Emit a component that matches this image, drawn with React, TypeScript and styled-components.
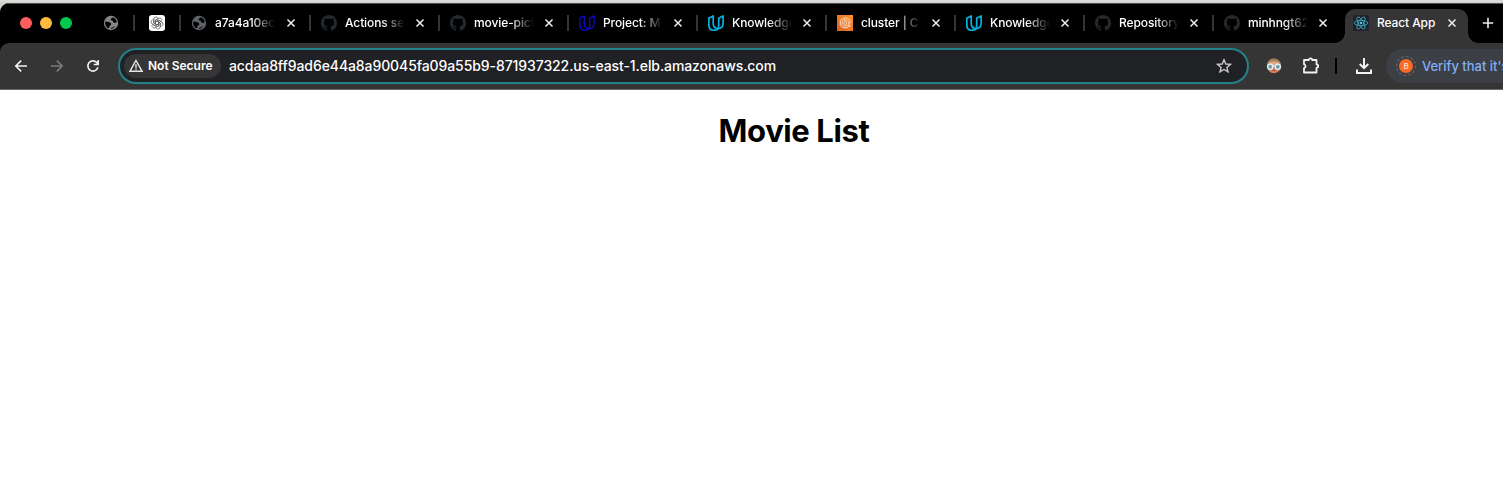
import React from 'react';
import styled, { createGlobalStyle } from 'styled-components';

const GlobalStyle = createGlobalStyle`
  * { box-sizing: border-box; }
  body { margin: 0; background: #fff; overflow: hidden; font-family: Inter, "Liberation Sans", sans-serif; }
  svg { display: block; flex: none; }
`;

const Desktop = styled.div`
  height: 492px;
  padding-top: 3px;
  overflow: hidden;
  background: linear-gradient(#d9dadb 0 2px, #d3d0c9 2px 16px, #fff 16px);
`;

const BrowserWindow = styled.div`
  width: 1588px;
  height: 489px;
  background: #fff;
  border-radius: 9px 0 0 0;
  overflow: hidden;
`;

const TabStrip = styled.div`
  display: flex;
  height: 40px;
  padding-bottom: 1px;
  background: #000;
  border-top: 1px solid #55534f;
`;

const TrafficLights = styled.div`
  display: flex;
  align-items: center;
  gap: 8px;
  width: 103px;
  padding-left: 20px;
  flex: none;
`;

const Light = styled.span<{ $color: string }>`
  width: 12px;
  height: 12px;
  border-radius: 50%;
  background: ${(p) => p.$color};
`;

const PinnedTab = styled.div<{ $width: number; $pad: number }>`
  display: flex;
  align-items: center;
  flex: none;
  width: ${(p) => p.$width}px;
  padding-left: ${(p) => p.$pad}px;
`;

const Separator = styled.span`
  width: 2px;
  height: 16px;
  margin-left: auto;
  background: #353535;
  flex: none;
`;

const Tab = styled.div<{ $first?: boolean }>`
  display: flex;
  align-items: center;
  flex: none;
  width: ${(p) => (p.$first ? 130 : 129)}px;
  padding-left: 10px;
`;

const TabTitle = styled.span<{ $faded?: boolean }>`
  width: 60px;
  margin-left: 8px;
  margin-top: -1px;
  overflow: hidden;
  white-space: nowrap;
  color: #fff;
  font-size: 12px;
  line-height: 18px;
  font-weight: 500;
  letter-spacing: -0.1px;
  ${(p) => p.$faded && 'mask-image: linear-gradient(to right, #000 60%, transparent 100%);'}
`;

const CloseButton = styled.span<{ $gap: number }>`
  display: flex;
  margin-left: ${(p) => p.$gap}px;
`;

const ActiveTab = styled.div`
  position: relative;
  display: flex;
  align-items: center;
  flex: none;
  width: 123px;
  height: 34px;
  margin: 5px 0 0 2px;
  padding: 0 0 6px 8px;
  border-radius: 10px 10px 0 0;
  background: #353535;
  &::before, &::after {
    content: '';
    position: absolute;
    bottom: 0;
    width: 10px;
    height: 10px;
  }
  &::before { left: -10px; background: radial-gradient(circle at 0 0, transparent 9.5px, #353535 10px); }
  &::after { right: -10px; background: radial-gradient(circle at 100% 0, transparent 9.5px, #353535 10px); }
`;

const NewTab = styled.span`
  display: flex;
  align-items: center;
  padding-left: 14px;
`;

const ToolbarBack = styled.div`
  background: #000;
`;

const Toolbar = styled.div`
  display: flex;
  align-items: center;
  height: 47px;
  padding: 0 0 1px 13px;
  background: #353535;
  border-bottom: 1px solid #6a6a6a;
  border-radius: 9px 0 0 0;
`;

const NavButtons = styled.div`
  display: flex;
  gap: 20px;
  width: 105px;
  flex: none;
`;

const AddressBar = styled.div`
  display: flex;
  align-items: center;
  width: 1131px;
  height: 36px;
  padding: 0 15px 0 4px;
  border: 2px solid #238189;
  border-radius: 18px;
  background: #202125;
  flex: none;
`;

const SecurityChip = styled.div`
  display: flex;
  align-items: center;
  gap: 4px;
  width: 97px;
  height: 24px;
  padding-left: 4px;
  border-radius: 12px;
  background: #353535;
  color: #fff;
  font-size: 12px;
  font-weight: 600;
  white-space: nowrap;
`;

const Url = styled.span`
  flex: 1;
  margin-left: 8px;
  color: #fff;
  font-size: 14px;
  font-weight: 500;
  letter-spacing: -0.088px;
  white-space: nowrap;
`;

const Actions = styled.div`
  display: flex;
  align-items: center;
  flex: none;
  padding-left: 16px;
`;

const ExtensionsButton = styled.span`
  display: flex;
  margin-left: 19px;
`;

const Divider = styled.span`
  width: 2px;
  height: 16px;
  margin: 0 18px 0 15px;
  background: #000;
`;

const VerifyChip = styled.div`
  display: flex;
  align-items: center;
  gap: 6px;
  width: 190px;
  height: 34px;
  margin-left: 13px;
  padding-left: 10px;
  border-radius: 17px;
  background: #3c3f44;
  color: #80aef5;
  font-size: 13px;
  font-weight: 500;
  letter-spacing: -0.02px;
  white-space: nowrap;
`;

const Avatar = styled.span`
  display: flex;
  align-items: center;
  justify-content: center;
  width: 20px;
  height: 20px;
  border: 1px dashed #77716d;
  border-radius: 50%;
`;

const Initial = styled.span`
  width: 14px;
  height: 14px;
  border-radius: 50%;
  background: #fa6a25;
  color: #ffe1cf;
  font-size: 8px;
  line-height: 14px;
  font-weight: 500;
  text-align: center;
`;

const PageTitle = styled.h1`
  margin: 21px 0 0;
  text-align: center;
  color: #000;
  font-size: 31px;
  line-height: 40px;
  font-weight: 700;
  letter-spacing: -0.4px;
`;

const Globe = ({ color }: { color: string }) => (
  <svg width="16" height="16" viewBox="0 0 16 16">
    <circle cx="8" cy="8" r="7.2" fill={color} />
    <path d="M2.200 6.500c1.500.3 4.200.2 5.500 1.500 1 1 .5 1.900-.4 2.300-.9.300-.7 1.600-1.100 2.300-.3.5-.9.700-1.400.4C2.800 11.800 1.700 9.300 2.200 6.500z" fill="#000" />
    <path d="M9.500 2.300c.1 1.100-1.700 1-1.900 2-.2 1 .9 1.100 1.900 1.500.9.400.4 1.700 1.400 2 1 .3 1.700-.7 2.900-.2-.1-2.600-1.700-4.700-4.300-5.300zM7.900 13.900c.2-1 .7-1.600 1.700-1.500 1.100 0 1.200-1.300 2.300-1.500-.7 1.700-2.200 2.800-4 3z" fill="#000" />
  </svg>
);

const ChatGpt = () => (
  <svg width="16" height="16" viewBox="0 0 16 16">
    <rect width="16" height="16" rx="3" fill="#fff" />
    <g fill="none" stroke="#555" strokeWidth=".7" strokeLinejoin="round">
      {[0, 60, 120, 180, 240, 300].map((a) => (
        <path key={a} transform={`rotate(${a} 8 8)`} d="M6.300 9V5.200l3.200-1.900a2.400 2.400 0 0 1 3.500 2.600M6.300 7.100l3.300-1.900 3.200 1.900" />
      ))}
    </g>
  </svg>
);

const Github = () => (
  <svg width="16" height="16" viewBox="0 0 16 16">
    <path fill="#24292e" d="M8 0C3.580 0 0 3.580 0 8c0 3.540 2.290 6.530 5.470 7.590.4.070.55-.17.55-.38 0-.19-.01-.82-.01-1.490-2.010.37-2.530-.49-2.690-.94-.09-.23-.48-.94-.82-1.130-.28-.15-.68-.52-.01-.53.63-.01 1.080.58 1.230.82.72 1.210 1.870.87 2.330.66.07-.52.28-.87.51-1.070-1.780-.2-3.640-.89-3.640-3.950 0-.87.31-1.590.82-2.150-.08-.2-.36-1.020.08-2.120 0 0 .67-.21 2.200.82.64-.18 1.320-.27 2-.27s1.360.09 2 .27c1.530-1.040 2.200-.82 2.200-.82.44 1.100.16 1.920.08 2.120.51.56.82 1.270.82 2.150 0 3.070-1.870 3.750-3.650 3.950.29.25.54.73.54 1.480 0 1.070-.01 1.930-.01 2.200 0 .21.15.46.55.38A8.010 8.010 0 0 0 16 8c0-4.420-3.580-8-8-8z" />
  </svg>
);

const Udacity = ({ color, bold }: { color: string; bold?: boolean }) => (
  <svg width="16" height="16" viewBox="0 0 16 16" fill="none" stroke={color} strokeWidth={bold ? 1.7 : 1.2} strokeLinejoin="round">
    <path d="M5.200.9.800 3.300v6.200c0 3.700 2.100 5.800 5.100 5.800 1.700 0 3.200-.6 4.200-1.700-3.100-.2-4.900-2-4.900-5.100z" />
    <path d="M15.100.9 10.700 3.300v5.600c0 2.100-.1 3.500-.7 4.700 3.400-.1 5.100-2.100 5.100-5.300z" />
  </svg>
);

const Cluster = () => (
  <svg width="16" height="16" viewBox="0 0 16 16">
    <defs><linearGradient id="ecs" x1="0" y1="1" x2="1" y2="0"><stop stopColor="#d85f24" /><stop offset="1" stopColor="#ff9430" /></linearGradient></defs>
    <rect width="16" height="16" fill="url(#ecs)" />
    <g fill="none" stroke="#ffe3cb" strokeWidth=".9">
      <path d="M13 8.600V5.500L10.300 3.200H6.200L3.300 5.500v4.800l2.800 2.400h4l1-.8" />
      <path d="M6.700 5h3l1.700 1.600v2.700L9.700 11h-3L5 9.300V6.600z" />
      <path d="m8.200 6.500 1.300.8v1.500l-1.300.8-1.300-.8V7.300z" />
      <circle cx="12" cy="10.800" r="1" />
    </g>
  </svg>
);

const ReactLogo = () => (
  <svg width="16" height="16" viewBox="0 0 16 16">
    <rect width="16" height="16" rx="1.500" fill="#20232a" />
    <circle cx="8" cy="8" r="1.300" fill="#4fc4df" />
    <g fill="none" stroke="#3caeca" strokeWidth=".8">
      <ellipse cx="8" cy="8" rx="6.800" ry="2.600" />
      <ellipse cx="8" cy="8" rx="6.800" ry="2.600" transform="rotate(60 8 8)" />
      <ellipse cx="8" cy="8" rx="6.800" ry="2.600" transform="rotate(120 8 8)" />
    </g>
  </svg>
);

const Close = ({ gap = 10 }: { gap?: number }) => (
  <CloseButton $gap={gap}>
    <svg width="10" height="10" viewBox="0 0 10 10" stroke="#eee" strokeWidth="1.500"><path d="m1.500 1.500 7 7m0-7-7 7" /></svg>
  </CloseButton>
);

const strokeIcon = { fill: 'none', stroke: '#f1f1f1', strokeWidth: 1.6 } as const;

const tabs: { title: string; icon: React.ReactNode }[] = [
  { title: 'a7a4a10ec', icon: <Globe color="#5f6369" /> },
  { title: 'Actions se', icon: <Github /> },
  { title: 'movie-pict', icon: <Github /> },
  { title: 'Project: M', icon: <Udacity color="#0b0be4" /> },
  { title: 'Knowledge', icon: <Udacity color="#02b3e4" bold /> },
  { title: 'cluster | C', icon: <Cluster /> },
  { title: 'Knowledge', icon: <Udacity color="#02b3e4" bold /> },
  { title: 'Repository', icon: <Github /> },
  { title: 'minhngt62', icon: <Github /> },
];

export default function App() {
  return (
    <Desktop>
      <GlobalStyle />
      <BrowserWindow>
        <TabStrip>
          <TrafficLights>
            <Light $color="#ff5f5c" />
            <Light $color="#ffbb40" />
            <Light $color="#00ca4b" />
          </TrafficLights>
          <PinnedTab $width={32} $pad={0}><Globe color="#858585" /><Separator /></PinnedTab>
          <PinnedTab $width={46} $pad={14}><ChatGpt /><Separator /></PinnedTab>
          {tabs.map((tab, i) => (
            <Tab key={i} $first={i === 0}>
              {tab.icon}
              <TabTitle $faded>{tab.title}</TabTitle>
              <Close gap={i === 0 ? 11 : 10} />
              {i < tabs.length - 1 && <Separator />}
            </Tab>
          ))}
          <ActiveTab>
            <ReactLogo />
            <TabTitle>React App</TabTitle>
            <Close />
          </ActiveTab>
          <NewTab>
            <svg width="12" height="12" viewBox="0 0 12 12" stroke="#eee" strokeWidth="1.600"><path d="M6 .8v10.400M.8 6h10.400" /></svg>
          </NewTab>
        </TabStrip>
        <ToolbarBack>
          <Toolbar>
            <NavButtons>
              <svg width="16" height="16" viewBox="0 0 16 16" {...strokeIcon}><path d="M14 8H3M8.200 2.600 2.800 8l5.400 5.400" /></svg>
              <svg width="16" height="16" viewBox="0 0 16 16" {...strokeIcon} stroke="#7b7b7b"><path d="M2 8h11M7.800 2.600 13.200 8l-5.400 5.400" /></svg>
              <svg width="16" height="16" viewBox="0 0 16 16" {...strokeIcon}><path d="M12.900 9.300A5.100 5.100 0 1 1 11.600 4.400L13 5.900M13.200 2v4.500H8.700" /></svg>
            </NavButtons>
            <AddressBar>
              <SecurityChip>
                <svg width="16" height="16" viewBox="0 0 16 16" fill="none" stroke="#e6e6e6" strokeWidth="1.400"><path d="M8 2.500 14.100 13.300H1.900zM8 6.300v3.600M8 10.800v1.300" /></svg>
                Not Secure
              </SecurityChip>
              <Url>acdaa8ff9ad6e44a8a90045fa09a55b9-871937322.us-east-1.elb.amazonaws.com</Url>
              <svg width="16" height="16" viewBox="0 0 16 16" fill="none" stroke="#c7c7c7" strokeWidth="1.400"><path d="m8 1.800 1.800 4.200 4.600.4-3.500 3 1.100 4.500L8 11.500l-4 2.400 1.100-4.500-3.500-3 4.600-.4z" /></svg>
            </AddressBar>
            <Actions>
              <svg width="18" height="18" viewBox="0 0 18 18">
                <circle cx="9" cy="9" r="7.200" fill="#ce8060" />
                <path d="M1.900 7.500a7.200 7.200 0 0 1 14.200 0L14 6.200 9 5 4 6.200z" fill="#a3825d" />
                <path d="M4 5.500C6 4 12 4 14 5.500V8H4z" fill="#dfab83" />
                <circle cx="5.200" cy="9.700" r="2.600" fill="#719eb0" stroke="#e5f2f5" strokeWidth="1.300" />
                <circle cx="12.800" cy="9.700" r="2.600" fill="#719eb0" stroke="#e5f2f5" strokeWidth="1.300" />
                <path d="M7.500 9h3" stroke="#eee" />
                <path d="M7.500 13.500h3" stroke="#965343" />
              </svg>
              <ExtensionsButton>
                <svg width="18" height="18" viewBox="0 0 18 18" {...strokeIcon} strokeWidth="1.800" strokeLinejoin="round">
                  <path d="M2 3h4.800a1.700 1.700 0 0 1 3.400 0h4.300v4.400a1.700 1.700 0 0 1 0 3.400v4.700H2v-4.300a2 2 0 0 0 0-3.900z" />
                </svg>
              </ExtensionsButton>
              <Divider />
              <svg width="18" height="18" viewBox="0 0 18 18" {...strokeIcon} strokeWidth="2"><path d="M9 1v9.800M4.700 7 9 11.200 13.300 7M2 12.500V16h14v-3.500" /></svg>
              <VerifyChip>
                <Avatar><Initial>B</Initial></Avatar>
                Verify that it's
              </VerifyChip>
            </Actions>
          </Toolbar>
        </ToolbarBack>
        <PageTitle>Movie List</PageTitle>
      </BrowserWindow>
    </Desktop>
  );
}
